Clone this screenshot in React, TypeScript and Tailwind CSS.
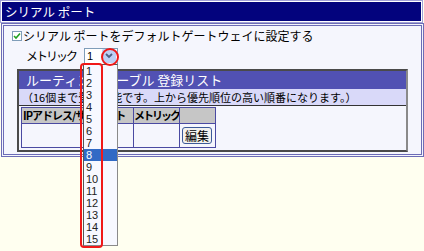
import React from 'react'

const jp = { fontFamily: '"Noto Sans CJK JP", "Noto Sans", sans-serif' }

const items = Array.from({ length: 15 }, (_, i) => i + 1)

export default function App() {
  return (
    <div className="relative w-[424px] h-[251px] overflow-hidden bg-[#fffff0] text-black" style={jp}>
      {/* window title */}
      <div className="w-[423px] border border-[#a2a2d6] p-px bg-white">
        <div className="h-[19px] bg-[#03037d] pl-[3px] text-[12.5px] leading-[19px] text-white">シリアル ポート</div>
      </div>

      {/* panel */}
      <div className="ml-px w-[423px] border-[3px] border-double border-[#6c6cb6] bg-[#f5f6fd] pt-px pb-[2px]">
        <div className="flex h-[18px] items-center pl-[8px]">
          <span className="flex h-[10px] w-[10px] items-center justify-center border border-[#7f9db9] bg-white">
            <svg width="8" height="8" viewBox="0 0 8 8">
              <path d="M1 4 L3 6 L7 1.5" fill="none" stroke="#21a121" strokeWidth="1.6" />
            </svg>
          </span>
          <span className="ml-px text-[12px] leading-none">シリアル ポートをデフォルトゲートウェイに設定する</span>
        </div>

        <div className="mt-[2px] flex h-[18px] items-center pl-[22px]">
          <span className="w-[58px] text-[12px] leading-none tracking-[-2px]">メトリック</span>
          <div className="flex h-[17px] w-[34px] items-center justify-between border border-[#7f9db9] bg-white pl-[2px] pr-px">
            <span className="text-[11px] leading-none" style={{ fontFamily: '"Liberation Sans", sans-serif' }}>1</span>
            <span className="flex h-[14px] w-[14px] items-center justify-center rounded-[2px] bg-[#bcd0f6]">
              <svg width="8" height="6" viewBox="0 0 8 6">
                <path d="M1 1 L4 4 L7 1" fill="none" stroke="#4d6185" strokeWidth="1.8" />
              </svg>
            </span>
          </div>
        </div>

        {/* routing table box */}
        <div className="ml-[13px] mt-[4px] w-[391px] border-2 border-[#4a4a4a] border-r-[#8a8a8a]">
          <div className="h-[18px] bg-[#5151b3] pl-[7px] text-[13px] leading-[18px] text-white">ルーティングテーブル 登録リスト</div>
          <div className="h-[17px] border-b border-[#333] bg-[#d9d9f9] pl-[3px] text-[11px] leading-[16px]">
            （16個まで登録可能です。上から優先順位の高い順番になります。）
          </div>
          <div className="pl-[2px] pt-px pb-[2px]">
            <table className="w-[194px] table-fixed border-collapse border border-[#4a4aa2] text-[11px]">
              <colgroup>
                <col className="w-[112px]" />
                <col className="w-[46px]" />
                <col className="w-[36px]" />
              </colgroup>
              <thead>
                <tr className="h-[16px] bg-[#c6c6c6]">
                  <th className="overflow-hidden whitespace-nowrap border border-[#4a4aa2] p-0 pl-px text-left font-bold leading-none tracking-[-1px]">IPアドレス/サブネット</th>
                  <th className="overflow-hidden whitespace-nowrap border border-[#4a4aa2] p-0 text-left font-bold leading-none tracking-[-2px]">メトリック</th>
                  <th className="border border-[#4a4aa2] p-0"></th>
                </tr>
              </thead>
              <tbody>
                <tr className="h-[24px]">
                  <td className="border border-[#4a4aa2]"></td>
                  <td className="border border-[#4a4aa2]"></td>
                  <td className="border border-[#4a4aa2] px-[2px]">
                    <span className="flex h-[17px] w-[30px] items-center justify-center rounded-[3px] border border-[#3c5a9a] bg-[#f2f2ee] text-[12px] leading-none">編集</span>
                  </td>
                </tr>
              </tbody>
            </table>
          </div>
        </div>
      </div>

      {/* open dropdown list */}
      <div className="absolute left-[83px] top-[64px] h-[182px] w-[35px] border border-[#555] border-r-[#8a8a8a] border-b-[#8a8a8a] bg-[#f7f8ff]">
        {items.map((n) => (
          <div
            key={n}
            className={n === 8 ? 'h-[12px] bg-[#316ac5] pl-[2px] text-[11px] leading-[12px] text-white' : 'h-[12px] pl-[2px] text-[11px] leading-[12px] text-[#222]'}
            style={{ fontFamily: '"Liberation Sans", sans-serif' }}
          >
            {n}
          </div>
        ))}
      </div>

      {/* red annotations */}
      <div className="absolute left-[80px] top-[63px] h-[185px] w-[23px] rounded-[4px] border-[2.5px] border-[#f01818]" />
      <div className="absolute left-[101px] top-[48px] h-[18px] w-[18px] rounded-full border-[2.5px] border-[#f01818]" />
    </div>
  )
}
